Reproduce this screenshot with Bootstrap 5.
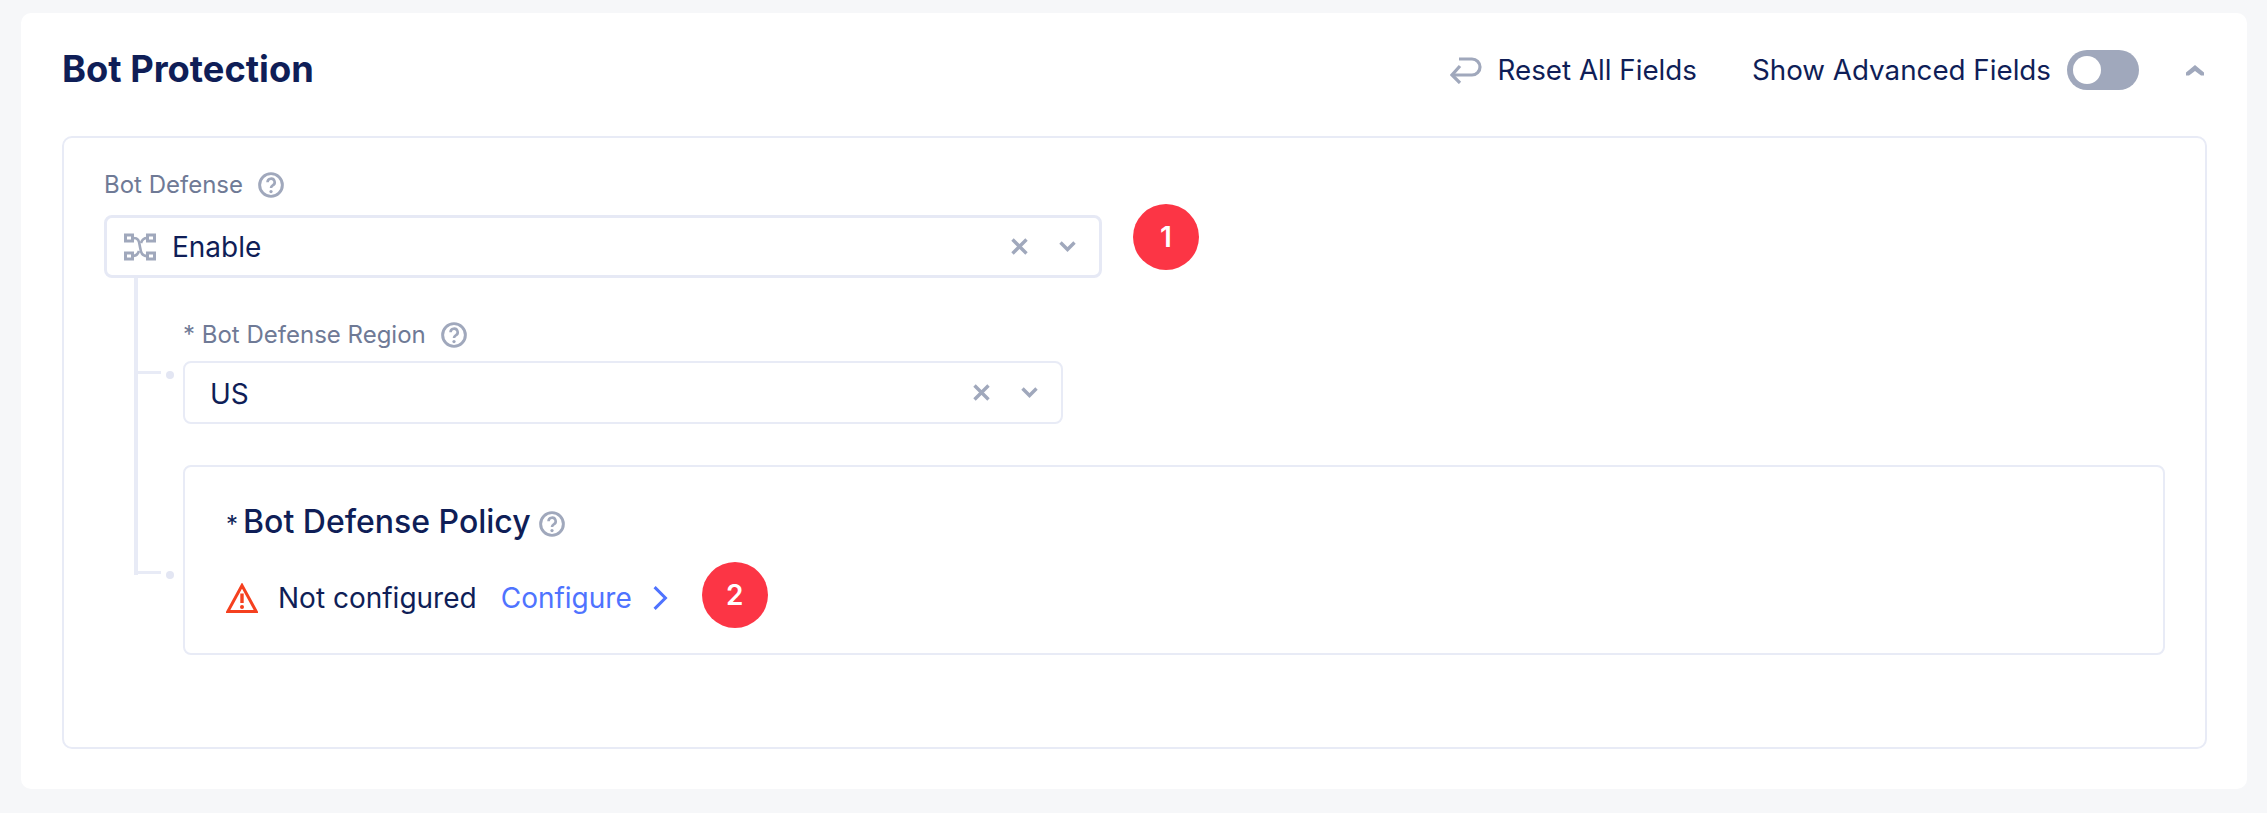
<!DOCTYPE html>
<html>
<head>
    <meta charset="utf-8">
    <title>Bot Protection</title>
    <link href="https://cdn.jsdelivr.net/npm/bootstrap@5.3.0/dist/css/bootstrap.min.css" rel="stylesheet">
    <style>
        body { background: #f6f7f9; font-family: Inter, "Liberation Sans", sans-serif; color: #0f1e57; padding: 13px 20px 23px 21px; }
        .panel { background: #fff; border-radius: 10px; padding: 0 40px 40px 41px; }
        .panel-head { height: 114px; margin-bottom: 9px; }
        .panel-title { font-size: 36.3px; font-weight: 700; margin: 0; color: #0f1e57; }
        .head-text { font-size: 27.75px; line-height: 28px; }
        .icon-grey { color: #a0a8bc; }
        .switch-wrap { margin: 0 0 0 16px; padding: 0; min-height: 0; }
        .switch-wrap .form-check-input { width: 72px; height: 40px; margin: 0; float: none; display: block; background-color: #a0a8bc; border: 0;
            background-image: url("data:image/svg+xml,%3csvg xmlns='http://www.w3.org/2000/svg' viewBox='-4 -4 8 8'%3e%3ccircle r='2.8' fill='%23fff'/%3e%3c/svg%3e"); }
        .box-outer { border: 2px solid #e8ebf6; border-radius: 10px; padding: 33px 40px 92px; height: 613px; }
        .field-label { font-size: 24px; line-height: 28px; color: #6f7a96; margin-bottom: 16px; gap: 15px; }
        .select-main { width: 998px; height: 63px; border: 3px solid #e6e9f5; border-radius: 8px; padding: 0 23px 0 17px; }
        .select-sub { width: 880px; height: 63px; border: 2px solid #e8ebf6; border-radius: 8px; padding: 0 23px 0 25px; }
        .select-sub .select-text { padding-top: 2px; }
        .select-text { font-size: 28px; line-height: 32px; }
        .num-badge { width: 66px; height: 66px; background: #fc3545; color: #fff; font-size: 28px; font-weight: 600; flex: none; }
        .num-one { margin: -11px 0 0 31px; align-self: flex-start; }
        .num-two { margin: -14px 0 -8px 33px; }
        .tree-nest { position: relative; margin-left: 30px; padding: 43px 0 0 49px; }
        .tree-line { position: absolute; left: 0; top: 0; bottom: 80px; width: 28px; border-left: 4px solid #e8ebf6; }
        .tree-dot { position: absolute; left: 32px; width: 8px; height: 8px; border-radius: 50%; background: #e3e6f3; }
        .tree-arm { position: absolute; left: 0; width: 27px; height: 3px; background: #e8ebf6; }
        .sub-label { margin-bottom: 12px; }
        .policy-box { border: 2px solid #e8ebf6; border-radius: 8px; margin-top: 41px; height: 190px; padding: 35px 41px 0; }
        .policy-title { font-size: 32px; line-height: 40px; font-weight: 500; margin: 0; }
        .policy-star { font-size: 24px; font-weight: 400; margin-right: 5px; }
        .policy-row { height: 44px; margin-top: 31px; font-size: 28px; }
        .cfg-link { color: #4f73ff; text-decoration: none; margin-left: 24px; }
    </style>
</head>
<body>
    <div class="panel">
        <div class="panel-head d-flex align-items-center justify-content-between">
            <h2 class="panel-title">Bot Protection</h2>
            <div class="d-flex align-items-center">
                <svg class="icon-grey" width="32" height="28" viewBox="0 0 32 28" fill="none" stroke="currentColor" stroke-width="3.200"><path d="M9 3H22a8 8 0 0 1 0 16H3"/><path d="M10 10 2 19l8 8"/></svg>
                <span class="head-text ms-3">Reset All Fields</span>
                <span class="head-text" style="margin-left:55px">Show Advanced Fields</span>
                <div class="form-check form-switch switch-wrap"><input class="form-check-input" type="checkbox" role="switch" aria-label="Show Advanced Fields"></div>
                <svg class="icon-grey" style="margin:0 3px 0 47px" width="18" height="11" viewBox="0 0 18 11" fill="currentColor"><path d="M9 0 18 7.500 18 10.500 15 10.500 9 6 3 10.500 0 10.500 0 7.500Z"/></svg>
            </div>
        </div>

        <div class="box-outer">
            <div class="field-label d-flex align-items-center">
                <span>Bot Defense</span>
                <svg class="icon-grey" width="26" height="26" viewBox="0 0 24 24" fill="none" stroke="currentColor" stroke-width="2.700"><circle cx="12" cy="12" r="10.500"/><path d="M8.800 9.500a3.300 3.300 0 1 1 4.800 2.900c-1 .6-1.600 1.200-1.600 2.400" stroke-width="2.400"/><circle cx="12" cy="18" r="1.500" fill="currentColor" stroke="none"/></svg>
            </div>
            <div class="d-flex">
                <div class="select-main d-flex align-items-center">
                    <svg class="icon-grey flex-shrink-0" width="32" height="28" viewBox="0 0 32 28" fill="none" stroke="currentColor" stroke-width="3"><rect x="1.500" y="2" width="7" height="6"/><rect x="23.500" y="2" width="7" height="6"/><rect x="1.500" y="20" width="7" height="6"/><rect x="23.500" y="20" width="7" height="6"/><path d="M9 5c6 0 6 3 7 9s2 9 7 9" stroke-width="2.600"/><path d="M9 23c3 0 5-2 6-5M17 10c1-3 3-5 6-5" stroke-width="2.600"/></svg>
                    <span class="select-text flex-grow-1" style="margin-left:16px">Enable</span>
                    <svg class="icon-grey" width="17" height="17" viewBox="0 0 17 17" stroke="currentColor" stroke-width="3.400"><path d="M1.500 1.500l14 14M15.500 1.500l-14 14"/></svg>
                    <svg class="icon-grey" style="margin-left:31px" width="17" height="11" viewBox="0 0 17 11" fill="none" stroke="currentColor" stroke-width="3.400"><path d="M1.500 1.500l7 7 7-7"/></svg>
                </div>
                <div class="num-badge num-one rounded-circle d-flex align-items-center justify-content-center">1</div>
            </div>

            <div class="tree-nest">
                <div class="tree-line"></div>
                <div class="tree-arm" style="top:93px"></div>
                <div class="tree-dot" style="top:93px"></div>
                <div class="tree-arm" style="top:293px"></div>
                <div class="tree-dot" style="top:293px"></div>

                <div class="field-label sub-label d-flex align-items-center">
                    <span>* Bot Defense Region</span>
                    <svg class="icon-grey" width="26" height="26" viewBox="0 0 24 24" fill="none" stroke="currentColor" stroke-width="2.700"><circle cx="12" cy="12" r="10.500"/><path d="M8.800 9.500a3.300 3.300 0 1 1 4.800 2.900c-1 .6-1.600 1.200-1.600 2.400" stroke-width="2.400"/><circle cx="12" cy="18" r="1.500" fill="currentColor" stroke="none"/></svg>
                </div>
                <div class="select-sub d-flex align-items-center">
                    <span class="select-text flex-grow-1">US</span>
                    <svg class="icon-grey" width="17" height="17" viewBox="0 0 17 17" stroke="currentColor" stroke-width="3.400"><path d="M1.500 1.500l14 14M15.500 1.500l-14 14"/></svg>
                    <svg class="icon-grey" style="margin-left:31px" width="17" height="11" viewBox="0 0 17 11" fill="none" stroke="currentColor" stroke-width="3.400"><path d="M1.500 1.500l7 7 7-7"/></svg>
                </div>

                <div class="policy-box">
                    <div class="d-flex align-items-center">
                        <h3 class="policy-title"><span class="policy-star">*</span>Bot Defense Policy</h3>
                        <svg class="icon-grey ms-2" width="26" height="26" viewBox="0 0 24 24" fill="none" stroke="currentColor" stroke-width="2.700"><circle cx="12" cy="12" r="10.500"/><path d="M8.800 9.500a3.300 3.300 0 1 1 4.800 2.900c-1 .6-1.600 1.200-1.600 2.400" stroke-width="2.400"/><circle cx="12" cy="18" r="1.500" fill="currentColor" stroke="none"/></svg>
                    </div>
                    <div class="policy-row d-flex align-items-center">
                        <svg class="flex-shrink-0" width="32" height="30" viewBox="0 0 32 30" fill="none"><path d="M16 2.500 1.800 28.500H30.200Z" stroke="#f5401f" stroke-width="3"/><path d="M16 10.500V20" stroke="#f5401f" stroke-width="3.400"/><circle cx="16" cy="24" r="2" fill="#f5401f"/></svg>
                        <span style="margin-left:20px">Not configured</span>
                        <a class="cfg-link" href="#">Configure</a>
                        <svg class="flex-shrink-0" style="margin-left:19px" width="18" height="26" viewBox="0 0 16 24" fill="none" stroke="#4f73ff" stroke-width="2.800"><path d="M3 2l10 10L3 22"/></svg>
                        <div class="num-badge num-two rounded-circle d-flex align-items-center justify-content-center">2</div>
                    </div>
                </div>
            </div>
        </div>
    </div>
    <script src="https://cdn.jsdelivr.net/npm/bootstrap@5.3.0/dist/js/bootstrap.bundle.min.js"></script>
</body>
</html>
